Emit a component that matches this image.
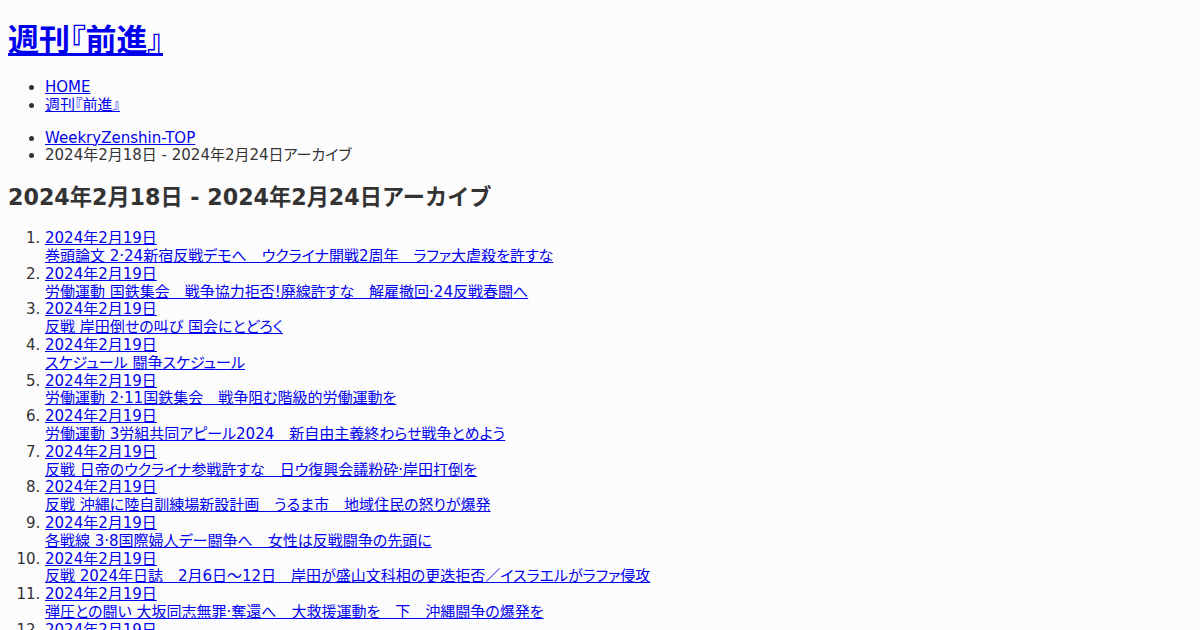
import React from "react";

const items = [
  "巻頭論文 2·24新宿反戦デモへ　ウクライナ開戦2周年　ラファ大虐殺を許すな",
  "労働運動 国鉄集会　戦争協力拒否!廃線許すな　解雇撤回·24反戦春闘へ",
  "反戦 岸田倒せの叫び 国会にとどろく",
  "スケジュール 闘争スケジュール",
  "労働運動 2·11国鉄集会　戦争阻む階級的労働運動を",
  "労働運動 3労組共同アピール2024　新自由主義終わらせ戦争とめよう",
  "反戦 日帝のウクライナ参戦許すな　日ウ復興会議粉砕·岸田打倒を",
  "反戦 沖縄に陸自訓練場新設計画　うるま市　地域住民の怒りが爆発",
  "各戦線 3·8国際婦人デー闘争へ　女性は反戦闘争の先頭に",
  "反戦 2024年日誌　2月6日～12日　岸田が盛山文科相の更迭拒否／イスラエルがラファ侵攻",
  "弾圧との闘い 大坂同志無罪·奪還へ　大救援運動を　下　沖縄闘争の爆発を",
  "労働運動 職場から 非正規職撤廃へ団結しよう",
];

const link = "text-[#0000ee] underline";

export default function App() {
  return (
    <div className="min-h-screen bg-[#fdfcfd] px-[8px] pt-[22px] text-[15px] leading-[17.8px] text-[#333] font-['DejaVu_Sans','Noto_Sans_CJK_JP',sans-serif] [font-feature-settings:'palt']">
      <h1 className="text-[31px] leading-[36px] font-bold mb-[21px]">
        <a href="#" className={link}>
          週刊『前進』
        </a>
      </h1>

      <ul className="list-disc pl-[37px] mb-[15px]">
        <li>
          <a href="#" className={link}>
            HOME
          </a>
        </li>
        <li>
          <a href="#" className={link}>
            週刊『前進』
          </a>
        </li>
      </ul>

      <ul className="list-disc pl-[37px] mb-[19px]">
        <li>
          <a href="#" className={link}>
            WeekryZenshin-TOP
          </a>
        </li>
        <li>2024年2月18日 - 2024年2月24日アーカイブ</li>
      </ul>

      <h2 className="text-[22.2px] leading-[26px] font-bold mb-[20px] [font-feature-settings:normal]">
        2024年2月18日 - 2024年2月24日アーカイブ
      </h2>

      <ol className="list-decimal pl-[37px]">
        {items.map((title, i) => (
          <li key={i}>
            <a href="#" className={link}>
              2024年2月19日
            </a>
            <br />
            <a href="#" className={link}>
              {title}
            </a>
          </li>
        ))}
      </ol>
    </div>
  );
}
